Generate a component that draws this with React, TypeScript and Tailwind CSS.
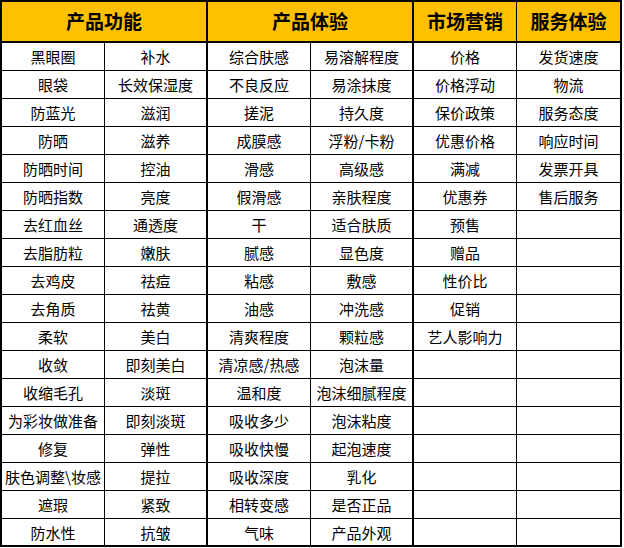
import React from "react";

const c1 = ["黑眼圈","眼袋","防蓝光","防晒","防晒时间","防晒指数","去红血丝","去脂肪粒","去鸡皮","去角质","柔软","收敛","收缩毛孔","为彩妆做准备","修复","肤色调整\\妆感","遮瑕","防水性"];
const c2 = ["补水","长效保湿度","滋润","滋养","控油","亮度","通透度","嫩肤","祛痘","祛黄","美白","即刻美白","淡斑","即刻淡斑","弹性","提拉","紧致","抗皱"];
const c3 = ["综合肤感","不良反应","搓泥","成膜感","滑感","假滑感","干","腻感","粘感","油感","清爽程度","清凉感/热感","温和度","吸收多少","吸收快慢","吸收深度","相转变感","气味"];
const c4 = ["易溶解程度","易涂抹度","持久度","浮粉/卡粉","高级感","亲肤程度","适合肤质","显色度","敷感","冲洗感","颗粒感","泡沫量","泡沫细腻程度","泡沫粘度","起泡速度","乳化","是否正品","产品外观"];
const c5 = ["价格","价格浮动","保价政策","优惠价格","满减","优惠券","预售","赠品","性价比","促销","艺人影响力"];
const c6 = ["发货速度","物流","服务态度","响应时间","发票开具","售后服务"];

const font = { fontFamily: '"Microsoft YaHei", "Noto Sans CJK SC", "Noto Sans", sans-serif' };

export default function App() {
  const rows = Array.from({ length: 18 }, (_, i) => i);
  return (
    <div className="bg-white w-[624px] h-[548px]" style={font}>
      <div className="w-[622px] border-2 border-black bg-white text-black">
        <div className="flex h-[41px] border-b-2 border-black bg-[#ffc000] text-[19px] font-bold">
          <div className="w-[206px] border-r-2 border-black flex items-center justify-center">产品功能</div>
          <div className="w-[206px] border-r-2 border-black flex items-center justify-center">产品体验</div>
          <div className="w-[103px] border-r border-black flex items-center justify-center">市场营销</div>
          <div className="w-[103px] flex items-center justify-center">服务体验</div>
        </div>
        {rows.map((i) => (
          <div
            key={i}
            className={
              "flex text-[15px] leading-none " +
              (i === 17 ? "h-[26px]" : "h-[28px] border-b border-black")
            }
          >
            <div className="w-[103px] border-r border-black flex items-center justify-center whitespace-nowrap">{c1[i]}</div>
            <div className="w-[103px] border-r-2 border-black flex items-center justify-center whitespace-nowrap">{c2[i]}</div>
            <div className="w-[103px] border-r border-black flex items-center justify-center whitespace-nowrap">{c3[i]}</div>
            <div className="w-[103px] border-r-2 border-black flex items-center justify-center whitespace-nowrap">{c4[i]}</div>
            <div className="w-[103px] border-r border-black flex items-center justify-center whitespace-nowrap">{c5[i] ?? ""}</div>
            <div className="w-[103px] flex items-center justify-center whitespace-nowrap">{c6[i] ?? ""}</div>
          </div>
        ))}
      </div>
    </div>
  );
}
